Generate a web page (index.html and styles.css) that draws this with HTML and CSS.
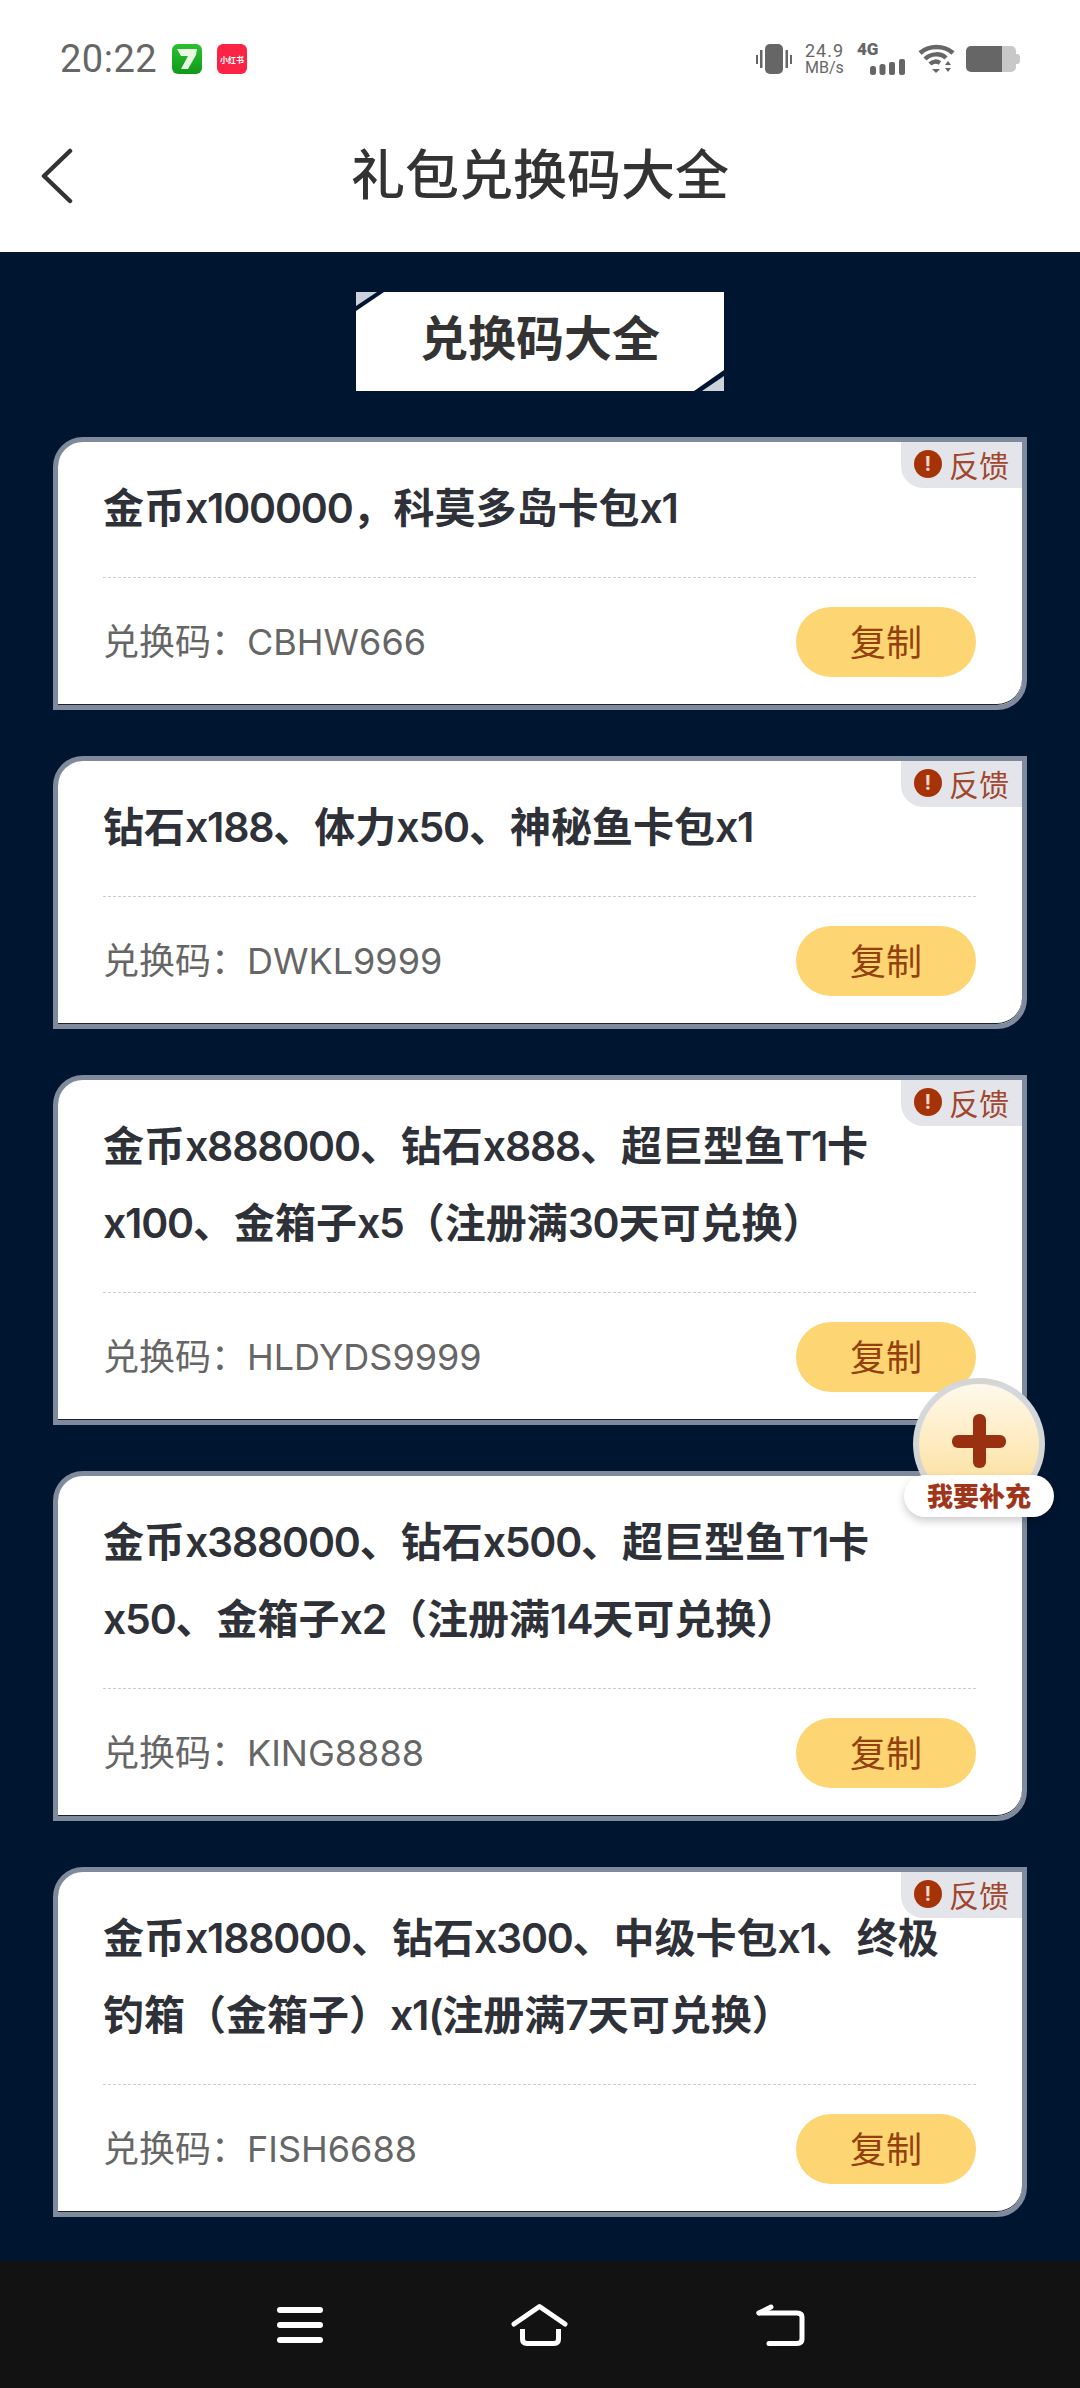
FILE: index.html
```html
<!DOCTYPE html>
<html lang="zh-CN">
<head>
    <meta charset="UTF-8">
    <meta name="viewport" content="width=device-width, initial-scale=1.0">
    <title>礼包兑换码大全</title>
    <link rel="stylesheet" href="styles.css">
</head>
<body>
    <!-- Status bar -->
    <div class="status-bar">
        <div class="status-left">
            <span class="clock">20:22</span>
            <span class="app-icon app-green">
                <svg width="30" height="30" viewBox="0 0 30 30"><path d="M5 5H25L24 11L16 25H9L16 12H9Z" fill="#e8f8e4"/></svg>
            </span>
            <span class="app-icon app-red">小红书</span>
        </div>
        <div class="status-right">
            <svg class="vibrate" width="36" height="30" viewBox="0 0 36 30" fill="#666">
                <rect x="9" y="0" width="18" height="30" rx="5"/>
                <rect x="0" y="11" width="2" height="9"/><rect x="4" y="6" width="2.5" height="18"/>
                <rect x="29.5" y="6" width="2.5" height="18"/><rect x="34" y="11" width="2" height="9"/>
            </svg>
            <div class="speed"><span class="speed-num">24.9</span><span>MB/s</span></div>
            <div class="signal">
                <span class="net">4G</span>
                <svg width="35" height="16" viewBox="0 0 35 16" fill="#666">
                    <rect x="0" y="7" width="6" height="9" rx="2.5"/><rect x="9.5" y="5" width="6" height="11" rx="2.5"/>
                    <rect x="19" y="3" width="6" height="13" rx="2"/><rect x="29" y="0" width="6" height="16" rx="2"/>
                </svg>
            </div>
            <svg class="wifi" width="37" height="30" viewBox="0 0 37 30" fill="none" stroke="#666" stroke-width="4.5">
                <path d="M2 9C11 1 26 1 35 9"/>
                <path d="M7 15C13 9 23 9 28 14"/>
                <path d="M12 20C15 17 19 17 22 19"/>
                <path d="M14 25L18 29L22 25Z" fill="#666" stroke="none"/>
                <path d="M30 17L33 21H27Z M27 24H33L30 28Z" fill="#666" stroke="none"/>
            </svg>
            <div class="battery"><span class="battery-level"></span><span class="battery-rest"></span><span class="battery-tip"></span></div>
        </div>
    </div>

    <!-- Header -->
    <div class="top-bar">
        <svg class="back" width="32" height="56" viewBox="0 0 32 56" fill="none" stroke="#333" stroke-width="4.5" stroke-linecap="round" stroke-linejoin="round">
            <path d="M29 3L3 28L29 53"/>
        </svg>
        <h1>礼包兑换码大全</h1>
    </div>

    <!-- Code list -->
    <div class="main">
        <div class="banner">
            <svg class="corner corner-tl" width="28" height="19" viewBox="0 0 28 19"><path d="M0 0H28L0 19Z" fill="#001530"/><path d="M0 0H21L0 14Z" fill="#cdd3dc"/></svg>
            <svg class="corner corner-br" width="30" height="21" viewBox="0 0 30 21"><path d="M30 21H0L30 0Z" fill="#001530"/><path d="M30 21H8L30 6Z" fill="#cdd3dc"/></svg>
            兑换码大全
        </div>

        <div class="card">
            <div class="feedback"><span class="alert">!</span>反馈</div>
            <div class="card-title">金币<span class="en">x100000</span>，科莫多岛卡包<span class="en">x1</span></div>
            <div class="card-row">
                <span class="code">兑换码：CBHW666</span>
                <button class="copy">复制</button>
            </div>
        </div>

        <div class="card">
            <div class="feedback"><span class="alert">!</span>反馈</div>
            <div class="card-title">钻石<span class="en">x188</span>、体力<span class="en">x50</span>、神秘鱼卡包<span class="en">x1</span></div>
            <div class="card-row">
                <span class="code">兑换码：DWKL9999</span>
                <button class="copy">复制</button>
            </div>
        </div>

        <div class="card">
            <div class="feedback"><span class="alert">!</span>反馈</div>
            <div class="card-title">金币<span class="en">x888000</span>、钻石<span class="en">x888</span>、超巨型鱼<span class="en">T1</span>卡<br><span class="en">x100</span>、金箱子<span class="en">x5</span>（注册满<span class="en">30</span>天可兑换）</div>
            <div class="card-row">
                <span class="code">兑换码：HLDYDS9999</span>
                <button class="copy">复制</button>
            </div>
        </div>

        <div class="card">
            <div class="card-title">金币<span class="en">x388000</span>、钻石<span class="en">x500</span>、超巨型鱼<span class="en">T1</span>卡<br><span class="en">x50</span>、金箱子<span class="en">x2</span>（注册满<span class="en">14</span>天可兑换）</div>
            <div class="card-row">
                <span class="code">兑换码：KING8888</span>
                <button class="copy">复制</button>
            </div>
        </div>

        <div class="card">
            <div class="feedback"><span class="alert">!</span>反馈</div>
            <div class="card-title">金币<span class="en">x188000</span>、钻石<span class="en">x300</span>、中级卡包<span class="en">x1</span>、终极<br>钓箱（金箱子）<span class="en">x1(</span>注册满<span class="en">7</span>天可兑换）</div>
            <div class="card-row">
                <span class="code">兑换码：FISH6688</span>
                <button class="copy">复制</button>
            </div>
        </div>
    </div>

    <!-- Floating add button -->
    <div class="add-btn">
        <div class="add-circle"><span class="plus-h"></span><span class="plus-v"></span></div>
        <div class="add-label">我要补充</div>
    </div>

    <!-- Navigation bar -->
    <div class="nav-bar">
        <svg width="46" height="36" viewBox="0 0 46 36" fill="#fff">
            <rect x="0" y="0" width="46" height="6" rx="3"/>
            <rect x="0" y="15" width="46" height="6" rx="3"/>
            <rect x="0" y="30" width="46" height="6" rx="3"/>
        </svg>
        <svg width="57" height="43" viewBox="0 0 57 43" fill="none" stroke="#fff" stroke-width="5" stroke-linecap="round" stroke-linejoin="round">
            <path d="M3 21L28.500 3.500L54 21"/>
            <path d="M11.500 26V36Q11.500 40.500 16 40.500H43Q47.500 40.500 47.500 36V26" stroke-linecap="butt"/>
        </svg>
        <svg width="49" height="42" viewBox="0 0 49 42" fill="none" stroke="#fff" stroke-width="5" stroke-linecap="round" stroke-linejoin="round">
            <path d="M3 9H41Q46 9 46 13V35Q46 39.500 41 39.500H13"/>
            <path d="M3 9L15 3"/>
        </svg>
    </div>
</body>
</html>
```

FILE: styles.css
```css
* {
    box-sizing: border-box;
}
body {
    margin: 0;
    width: 1080px;
    height: 2388px;
    position: relative;
    overflow: hidden;
    display: flex;
    flex-direction: column;
    font-family: Inter, "Noto Sans CJK SC", sans-serif;
    background-color: white;
}

/* status bar */
.status-bar {
    height: 118px;
    flex: none;
    display: flex;
    justify-content: space-between;
    align-items: center;
    padding: 0 60px 0 60px;
}
.status-left {
    display: flex;
    align-items: center;
}
.clock {
    font-family: Roboto, sans-serif;
    font-size: 38px;
    color: #666;
    width: 112px;
    letter-spacing: 0.5px;
}
.app-icon {
    width: 30px;
    height: 30px;
    border-radius: 6px;
    display: flex;
    align-items: center;
    justify-content: center;
}
.app-green {
    background: linear-gradient(#2cc130, #0f9a1a);
    margin-right: 15px;
}
.app-red {
    background-color: #fb2444;
    color: white;
    font-family: "Noto Sans CJK SC", sans-serif;
    font-size: 8px;
    font-weight: 700;
    white-space: nowrap;
}
.status-right {
    display: flex;
    align-items: center;
}
.vibrate {
    margin-right: 13px;
}
.speed {
    display: flex;
    flex-direction: column;
    font-family: Roboto, sans-serif;
    font-size: 16px;
    line-height: 17px;
    color: #666;
    width: 52px;
}
.speed-num {
    font-size: 18px;
    letter-spacing: 1px;
}
.signal {
    width: 48px;
    height: 32px;
    position: relative;
    display: flex;
    justify-content: flex-end;
    align-items: flex-end;
}
.net {
    position: absolute;
    left: 0;
    top: 0;
    font-family: Roboto, sans-serif;
    font-size: 17px;
    line-height: 13px;
    font-weight: 900;
    color: #666;
}
.wifi {
    margin-left: 13px;
}
.battery {
    margin-left: 11px;
    display: flex;
    align-items: center;
}
.battery-level {
    width: 36px;
    height: 26px;
    background-color: #666;
    border-radius: 5px 0 0 5px;
}
.battery-rest {
    width: 14px;
    height: 26px;
    background-color: #c8c8c8;
    border-radius: 0 5px 5px 0;
}
.battery-tip {
    width: 4px;
    height: 10px;
    background-color: #c8c8c8;
    border-radius: 0 3px 3px 0;
}

/* header */
.top-bar {
    height: 134px;
    flex: none;
    position: relative;
    display: flex;
    align-items: center;
    justify-content: center;
    padding-bottom: 28px;
}
.top-bar h1 {
    margin: 0;
    font-size: 54px;
    font-weight: 500;
    color: #333;
}
.back {
    position: absolute;
    left: 41px;
    top: 30px;
}

/* list */
.main {
    flex: 1;
    background-color: #001530;
    padding: 40px 53px 0 53px;
    display: flex;
    flex-direction: column;
    gap: 45.5px;
}
.banner {
    width: 368px;
    height: 99px;
    flex: none;
    align-self: center;
    position: relative;
    background-color: white;
    color: #333;
    font-size: 48px;
    font-weight: 700;
    line-height: 94px;
    text-align: center;
}
.corner {
    position: absolute;
    display: block;
}
.corner-tl {
    left: 0;
    top: 0;
}
.corner-br {
    right: 0;
    bottom: 0;
}
.card {
    position: relative;
    flex: none;
    background-color: white;
    border: 5px solid #7f8b9c;
    border-radius: 30px 0 30px 0;
    padding: 28.5px 46px 0 45px;
    box-shadow: inset 0 -1px 0 #1c2430;
}
.card-title {
    font-size: 41px;
    font-weight: 600;
    line-height: 77px;
    color: #2f3138;
    padding-bottom: 30px;
    border-bottom: 1px dashed #ccc;
    white-space: nowrap;
}
.en {
    letter-spacing: -1.2px;
}
.card-row {
    display: flex;
    justify-content: space-between;
    align-items: center;
    padding: 28.5px 0;
}
.code {
    font-size: 36px;
    color: #666;
    margin-bottom: 5px;
}
.copy {
    width: 180px;
    height: 70px;
    border: none;
    border-radius: 35px;
    background-color: #fdd572;
    color: #94410f;
    font-family: inherit;
    font-size: 36px;
    padding: 0 0 3px;
}
.feedback {
    position: absolute;
    top: 0;
    right: 0;
    width: 121px;
    height: 46px;
    background-color: #e3e5ea;
    border-radius: 0 0 0 22px;
    display: flex;
    align-items: center;
    padding: 0 0 2px 13px;
    color: #a0472e;
    font-size: 30px;
}
.alert {
    width: 28px;
    height: 28px;
    border-radius: 50%;
    background-color: #a63208;
    color: #f3d8cc;
    font-size: 20px;
    font-weight: 700;
    line-height: 28px;
    text-align: center;
    margin-right: 7px;
    flex: none;
}

/* floating button */
.add-btn {
    position: absolute;
    left: 904px;
    top: 1378px;
    width: 150px;
}
.add-circle {
    position: absolute;
    left: 9px;
    top: 0;
    width: 132px;
    height: 132px;
    border-radius: 50%;
    border: 6px solid rgba(205, 210, 218, 0.85);
    background: linear-gradient(#fff9ec, #fcdc92);
}
.plus-h {
    position: absolute;
    left: 33px;
    top: 51px;
    width: 54px;
    height: 13px;
    border-radius: 6px;
    background-color: #99300f;
}
.plus-v {
    position: absolute;
    left: 53.5px;
    top: 30px;
    width: 13px;
    height: 54px;
    border-radius: 6px;
    background-color: #99300f;
}
.add-label {
    position: absolute;
    left: 0;
    top: 97px;
    width: 150px;
    height: 42px;
    border-radius: 21px;
    background-color: white;
    box-shadow: 0 4px 8px rgba(0, 0, 0, 0.2);
    color: #a0351a;
    font-family: "Noto Sans CJK SC", sans-serif;
    font-size: 26px;
    font-weight: 900;
    line-height: 40px;
    text-align: center;
}

/* nav bar */
.nav-bar {
    height: 127px;
    flex: none;
    background-color: #121212;
    display: flex;
    align-items: center;
    gap: 188px;
    padding-left: 277px;
}
```
